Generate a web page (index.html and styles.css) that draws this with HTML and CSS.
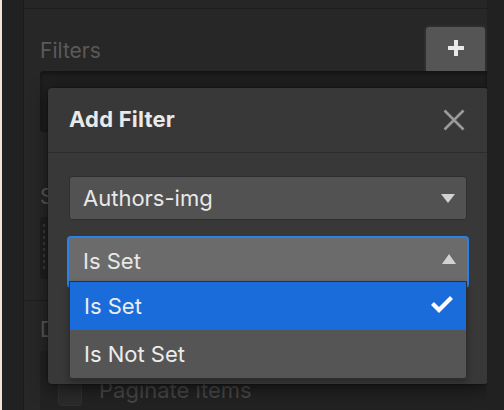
FILE: index.html
```html
<!DOCTYPE html>
<html lang="en">
<head>
<meta charset="utf-8">
<title>Add Filter</title>
<link rel="stylesheet" href="styles.css">
</head>
<body>
<div class="app">
  <div class="edge"></div>
  <div class="rail"></div>
  <main class="panel">
    <div class="topbar"></div>
    <section class="filters">
      <div class="filters-head">
        <span class="label">Filters</span>
        <button class="add-btn" type="button" aria-label="Add filter">
          <svg width="16" height="16" viewBox="0 0 16 16"><path d="M8 0v16M0 8h16" stroke="#e8e8e8" stroke-width="4"/></svg>
        </button>
      </div>
      <div class="filter-box"></div>
    </section>
    <section class="sort">
      <span class="label">Sort</span>
      <div class="sort-box"><span class="dash"></span></div>
    </section>
    <div class="divider"></div>
    <section class="display">
      <span class="label">Display</span>
      <div class="display-box">
        <span class="checkbox"></span>
        <span class="dim-text">Paginate items</span>
      </div>
    </section>

    <div class="modal" role="dialog">
      <div class="modal-head">
        <span class="modal-title">Add Filter</span>
        <svg class="close" width="22" height="22" viewBox="0 0 22 22"><path d="M1.5 1.5l19 19M20.5 1.5l-19 19" stroke="#9a9a9a" stroke-width="2.6"/></svg>
      </div>
      <div class="modal-body">
        <div class="select">
          <span>Authors-img</span>
          <svg width="14" height="9" viewBox="0 0 14 9"><path d="M0 0h14L7 9z" fill="#d2d2d2"/></svg>
        </div>
        <div class="select select-open">
          <div class="select-row">
            <span>Is Set</span>
            <svg width="14" height="10" viewBox="0 0 14 10"><path d="M0 10h14L7 0z" fill="#d2d2d2"/></svg>
          </div>
          <ul class="options">
            <li class="option selected"><span>Is Set</span>
              <svg width="24" height="19" viewBox="0 0 24 19"><path d="M2.5 9.5l6.5 6.5L21.5 3.5" fill="none" stroke="#ffffff" stroke-width="4.2"/></svg>
            </li>
            <li class="option"><span>Is Not Set</span></li>
          </ul>
        </div>
      </div>
    </div>
  </main>
  <div class="side"></div>
</div>
</body>
</html>
```

FILE: styles.css
```css
* { box-sizing: border-box; }
html, body { margin: 0; padding: 0; }
body {
  width: 504px;
  height: 410px;
  overflow: hidden;
  background: #1f1f1f;
  font-family: "Inter", "Noto Sans", sans-serif;
}
.app {
  display: flex;
  height: 410px;
}
.edge { width: 2px; background: #f4e4d8; }
.rail {
  width: 22px;
  background: #212121;
  border-right: 1px solid #1a1a1a;
}
.panel {
  position: relative;
  display: block;
  width: 463px;
  height: 410px;
  overflow: hidden;
  background: #272727;
}
.side { flex: 1; background: #212121; }

.topbar {
  height: 9px;
  background: #262626;
  border-bottom: 1px solid #1d1d1d;
}
.label {
  display: block;
  font-size: 21px;
  line-height: 24px;
  color: #5a5a5a;
}
.filters { padding-left: 16px; }
.filters-head {
  margin-top: 16px;
  height: 46px;
  display: flex;
  align-items: center;
  justify-content: space-between;
}
.filters-head .label { margin-top: 6px; }
.add-btn {
  width: 63px;
  height: 46px;
  padding: 0 0 2px;
  border: 2px solid #2e2e2e;
  border-bottom: none;
  border-radius: 5px 5px 0 0;
  background: #555555;
  display: flex;
  align-items: center;
  justify-content: center;
}
.filter-box {
  height: 61px;
  background: #1f1f1f;
  border-radius: 4px 0 0 4px;
  box-shadow: inset 0 2px 4px rgba(0,0,0,0.4);
}
.sort { padding-left: 16px; }
.sort .label { margin-top: 53px; }
.sort-box {
  margin-top: 8px;
  height: 62px;
  width: 120px;
  background: #1f1f1f;
  border-radius: 4px;
  padding: 7px 0 0 3px;
}
.dash {
  display: block;
  width: 2px;
  height: 46px;
  background: repeating-linear-gradient(#3a3a3a 0 3px, transparent 3px 6px);
}
.divider {
  margin-top: 21px;
  height: 1px;
  background: #1e1e1e;
}
.display { padding-left: 16px; }
.display .label { margin-top: 17px; }
.display-box {
  margin-top: 9px;
  height: 80px;
  background: #222222;
  border-radius: 4px 0 0 4px;
  display: flex;
  align-items: flex-start;
  padding: 31px 0 0 18px;
  gap: 17px;
}
.checkbox {
  width: 24px;
  height: 24px;
  border-radius: 4px;
  background: #2a2a2a;
  border: 1px solid #303030;
}
.dim-text {
  font-size: 22px;
  line-height: 24px;
  margin-top: -4px;
  color: #474747;
}

.modal {
  position: absolute;
  left: 24px;
  top: 88px;
  width: 440px;
  height: 296px;
  background: #383838;
  border-radius: 4px;
  box-shadow: 0 4px 18px rgba(0,0,0,0.55), 0 0 0 1px rgba(0,0,0,0.15);
}
.modal-head {
  height: 65px;
  border-bottom: 1px solid #2c2c2c;
  display: flex;
  align-items: center;
  justify-content: space-between;
  padding: 0 23px 0 21px;
}
.modal-title {
  font-size: 22px;
  font-weight: 700;
  letter-spacing: 0.2px;
  color: #e9e9e9;
  margin-top: -2px;
}
.modal-body {
  padding: 23px 21px 0;
}
.select {
  height: 44px;
  background: #525252;
  border: 1px solid #2f2f2f;
  border-radius: 3px;
  display: flex;
  align-items: center;
  justify-content: space-between;
  padding: 0 11px 0 13px;
  font-size: 22px;
  color: #e8e8e8;
}
.select-open {
  position: relative;
  display: block;
  margin: 16px -2px 0;
  height: 52px;
  padding: 0;
  background: #6b6b6b;
  border: 2px solid #2a82e6;
  border-radius: 4px;
}
.select-row {
  height: 44px;
  padding: 2px 11px 0 14px;
  display: flex;
  align-items: center;
  justify-content: space-between;
}
.select-row svg { margin-top: -5px; }
.options {
  position: absolute;
  left: 0;
  top: 43px;
  width: 398px;
  margin: 0;
  padding: 0;
  list-style: none;
  background: #555555;
  border: 1px solid #2e2e2e;
  border-radius: 0 0 3px 3px;
  box-shadow: 0 3px 6px rgba(0,0,0,0.3);
}
.option {
  height: 48px;
  display: flex;
  align-items: center;
  justify-content: space-between;
  padding: 0 12px 0 14px;
  font-size: 22px;
  color: #ececec;
}
.option.selected { background: #1a6cda; }
.option svg { margin-top: -6px; }
```
